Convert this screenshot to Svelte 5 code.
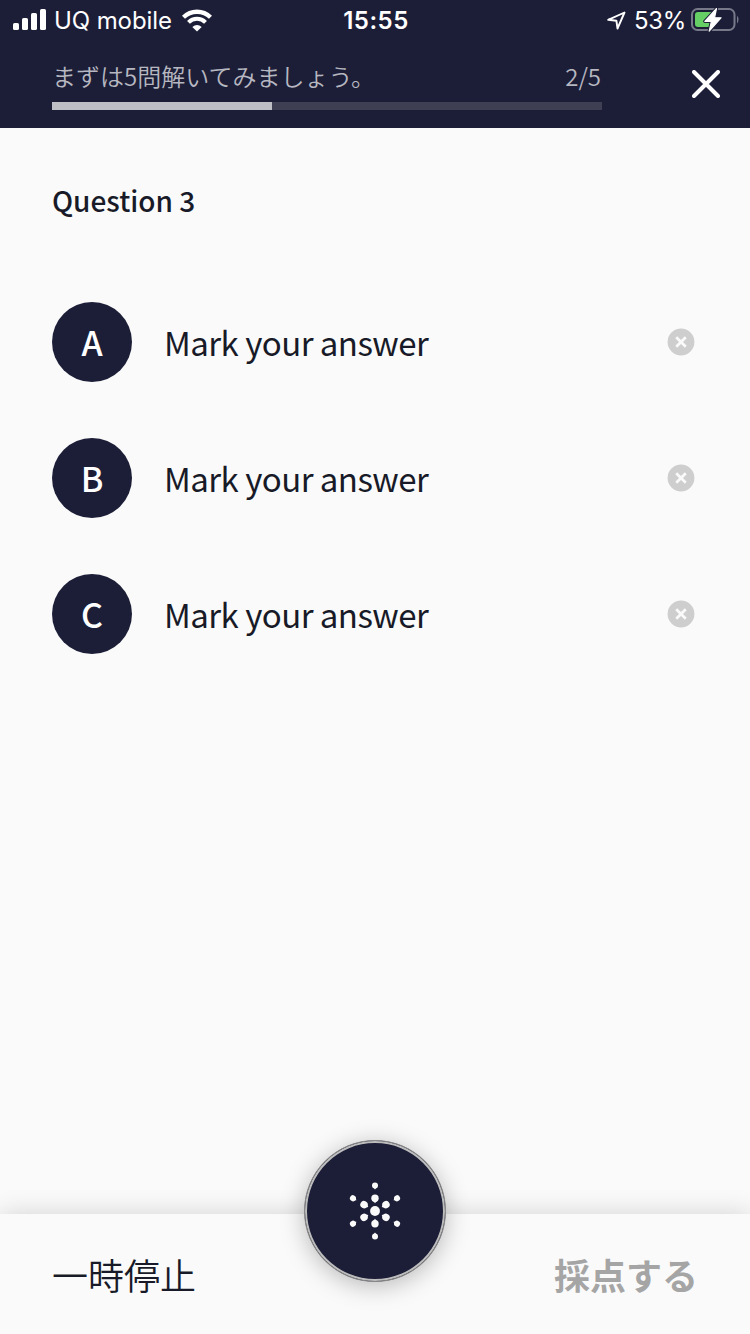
<script lang="ts">
  const total = 5;
  const answered = 2;
  const percent = (answered / total) * 100;
  const choices = ['A', 'B', 'C'];

  // angle of each spoke in the menu icon
  const spokes = [0, 60, 120, 180, 240, 300];
</script>

<div class="screen">
  <header class="header">
    <div class="status">
      <div class="status__side">
        <svg class="signal" width="34" height="22" viewBox="0 0 34 22" fill="#fff">
          <rect x="0" y="14" width="6" height="7" rx="1.6" />
          <rect x="9" y="9" width="6" height="12" rx="1.6" />
          <rect x="18" y="4" width="6" height="17" rx="1.6" />
          <rect x="27" y="0" width="6" height="21" rx="1.6" />
        </svg>
        <span class="carrier">UQ mobile</span>
        <svg class="wifi" width="30" height="23" viewBox="0 0 30 23" fill="none" stroke="#fff">
          <path d="M1.5 8.3 A19.2 19.2 0 0 1 28.5 8.3" stroke-width="4.3" />
          <path d="M6.5 13.4 A12 12 0 0 1 23.5 13.4" stroke-width="4" />
          <path d="M10.3 18.1 Q15 14 19.7 18.1 L15 22.6Z" fill="#fff" stroke="none" />
        </svg>
      </div>
      <span class="time">15:55</span>
      <div class="status__side status__side--right">
        <svg class="location" width="20" height="20" viewBox="0 0 20 20" fill="none" stroke="#fff" stroke-width="1.9" stroke-linejoin="round">
          <path d="M18.5 2.5 L2.2 9.8 L10.4 10.7 L11.5 18.5Z" />
        </svg>
        <span class="battery-level">53%</span>
        <svg class="battery" width="48" height="26" viewBox="0 0 48 26">
          <rect x="1" y="2" width="42.5" height="21" rx="5.5" fill="none" stroke="#777989" stroke-width="2" />
          <path d="M46 8.5 Q49 12.5 46 16.5Z" fill="#777989" />
          <rect x="4" y="5" width="19" height="15" rx="3" fill="#65cf66" />
          <path d="M25.5 1.5 L13.8 14.4 H20.4 L18.2 24.2 L30 10.8 H23.5Z" fill="#1c1e37" stroke="#1c1e37" stroke-width="3.2" stroke-linejoin="round" />
          <path d="M25.5 1.5 L13.8 14.4 H20.4 L18.2 24.2 L30 10.8 H23.5Z" fill="#fff" stroke="#fff" stroke-width="1.2" stroke-linejoin="round" />
        </svg>
      </div>
    </div>

    <div class="progress">
      <div class="progress__main">
        <div class="progress__labels">
          <span>まずは5問解いてみましょう。</span>
          <span class="progress__count">{answered}/{total}</span>
        </div>
        <div class="progress__track">
          <div class="progress__bar" style="width: {percent}%"></div>
        </div>
      </div>
      <button class="close" aria-label="閉じる">
        <svg width="28" height="28" viewBox="0 0 28 28" fill="none" stroke="#fff" stroke-width="4" stroke-linecap="round">
          <path d="M2 2 L26 26 M26 2 L2 26" />
        </svg>
      </button>
    </div>
  </header>

  <main class="question">
    <h1>Question 3</h1>
    <ul class="choices">
      {#each choices as choice}
        <li class="choice">
          <span class="choice__letter">{choice}</span>
          <span class="choice__text">Mark your answer</span>
          <svg width="28" height="28" viewBox="0 0 28 28">
            <circle cx="14" cy="14" r="13.4" fill="#cecece" />
            <path d="M10.2 10.2 L17.8 17.8 M17.8 10.2 L10.2 17.8" stroke="#fafafa" stroke-width="2.7" stroke-linecap="square" />
          </svg>
        </li>
      {/each}
    </ul>
  </main>

  <footer class="footer">
    <button class="footer__pause">一時停止</button>
    <button class="footer__grade" disabled>採点する</button>
    <button class="menu" aria-label="メニュー">
      <svg width="60" height="60" viewBox="-30 -30 60 60" fill="#fafafa">
        <circle r="4.9" />
        {#each spokes as angle}
          <g transform="rotate({angle})">
            <circle cy="-12.7" r="3.7" />
            <path d="M-2.2 -10.4 L0 -7.8 L2.2 -10.4Z" />
            <circle cy="-25.5" r="3" />
            <path d="M-1.7 -23.7 L0 -21.4 L1.7 -23.7Z" />
          </g>
        {/each}
      </svg>
    </button>
  </footer>
</div>

<style>
  :global(body) {
    margin: 0;
    background: #fafafa;
  }

  .screen {
    display: flex;
    flex-direction: column;
    width: 750px;
    height: 1334px;
    overflow: hidden;
    background: #fafafa;
    color: #181a28;
    font-family: "Noto Sans CJK JP", sans-serif;
  }

  button {
    border: 0;
    padding: 0;
    background: none;
    font: inherit;
    color: inherit;
  }

  svg {
    display: block;
    flex: none;
  }

  .header {
    height: 128px;
    flex: none;
    background: #1c1e37;
    color: #fff;
  }

  .status {
    display: grid;
    grid-template-columns: 1fr auto 1fr;
    align-items: center;
    height: 40px;
    padding: 0 11px 0 13px;
    font: 24px/40px Inter, sans-serif;
    white-space: nowrap;
  }

  .status span {
    padding-top: 2px;
    line-height: 38px;
  }

  .status__side {
    display: flex;
    align-items: center;
  }

  .status__side--right {
    justify-content: flex-end;
  }

  .carrier {
    margin: 0 10px 0 7px;
    letter-spacing: -0.1px;
  }

  .time {
    font-weight: 600;
    letter-spacing: 0.5px;
  }

  .battery-level {
    margin: 0 5px 0 8px;
    letter-spacing: -0.3px;
  }

  .progress {
    display: flex;
    justify-content: space-between;
    padding: 18px 30px 0 52px;
  }

  .progress__main {
    width: 550px;
  }

  .progress__labels {
    display: flex;
    justify-content: space-between;
    height: 44px;
    font-size: 24px;
    font-weight: 350;
    line-height: 36px;
    color: #b6b7c0;
  }

  .progress__count {
    margin-right: 1px;
  }

  .progress__track {
    height: 8px;
    background: #3e3f53;
  }

  .progress__bar {
    height: 100%;
    background: #bebfc5;
  }

  .close {
    align-self: flex-start;
    margin-top: 12px;
  }

  .question {
    flex: 1;
    padding: 52px 55px 0 52px;
  }

  h1 {
    margin: 0 0 82px;
    font-size: 28px;
    font-weight: 500;
    line-height: 40px;
  }

  .choices {
    display: flex;
    flex-direction: column;
    gap: 56px;
    margin: 0;
    padding: 0;
    list-style: none;
  }

  .choice {
    display: flex;
    align-items: center;
    height: 80px;
  }

  .choice__letter {
    width: 80px;
    height: 80px;
    margin-right: 32px;
    border-radius: 50%;
    background: #1c1e37;
    color: #fff;
    font-size: 34px;
    font-weight: 500;
    line-height: 80px;
    text-align: center;
  }

  .choice__text {
    flex: 1;
    font-size: 33px;
    line-height: 80px;
    letter-spacing: -0.53px;
  }

  .footer {
    position: relative;
    display: flex;
    justify-content: space-between;
    height: 120px;
    flex: none;
    padding: 0 52px;
    background: #fafafa;
    box-shadow: 0 0 24px rgba(0, 0, 0, 0.16);
    font-size: 36px;
    line-height: 120px;
  }

  .footer__pause {
    font-weight: 350;
  }

  .footer__grade {
    font-weight: 700;
    color: #a5a5a5;
  }

  .menu {
    position: absolute;
    top: -74px;
    left: 304px;
    display: flex;
    align-items: center;
    justify-content: center;
    box-sizing: border-box;
    width: 142px;
    height: 142px;
    border: 1px solid #888;
    border-radius: 50%;
    background: #1c1e37;
    box-shadow: inset 0 0 0 2px #bdbdbd, 0 4px 24px rgba(0, 0, 0, 0.26);
  }
</style>
